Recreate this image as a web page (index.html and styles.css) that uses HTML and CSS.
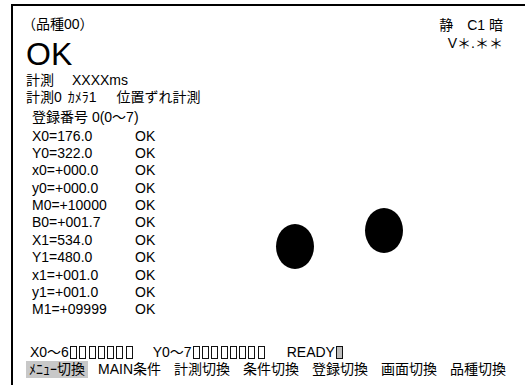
FILE: index.html
```html
<!DOCTYPE html>
<html lang="ja">
<head>
<meta charset="utf-8">
<link rel="stylesheet" href="styles.css">
</head>
<body>
<div class="frame">
  <header class="head">
    <div class="head-left">
      <div class="title">（品種00）</div>
      <div class="result">OK</div>
      <div class="line">計測<span class="gap-l">XXXXms</span></div>
      <div class="line">計測0<span class="gap-s">ｶﾒﾗ1</span><span class="gap-m">位置ずれ計測</span></div>
    </div>
    <div class="head-right">
      <div class="line">静　C1 暗</div>
      <div class="line">V＊.＊＊</div>
    </div>
  </header>

  <section class="data">
    <div class="reg">登録番号 0(0～7)</div>
    <div class="rows">
      <span>X0=176.0</span><span>OK</span>
      <span>Y0=322.0</span><span>OK</span>
      <span>x0=+000.0</span><span>OK</span>
      <span>y0=+000.0</span><span>OK</span>
      <span>M0=+10000</span><span>OK</span>
      <span>B0=+001.7</span><span>OK</span>
      <span>X1=534.0</span><span>OK</span>
      <span>Y1=480.0</span><span>OK</span>
      <span>x1=+001.0</span><span>OK</span>
      <span>y1=+001.0</span><span>OK</span>
      <span>M1=+09999</span><span>OK</span>
    </div>
  </section>

  <div class="blob blob-a"></div>
  <div class="blob blob-b"></div>

  <footer class="foot">
    <div class="io">
      <span class="io-label">X0～6</span><span class="bits"><i></i><i></i><i></i><i></i><i></i><i></i><i></i></span>
      <span class="io-label io-y">Y0～7</span><span class="bits"><i></i><i></i><i></i><i></i><i></i><i></i><i></i><i></i></span>
      <span class="io-label io-ready">READY</span><span class="bits"><i class="on"></i></span>
    </div>
    <nav class="menu">
      <span class="item active">ﾒﾆｭｰ切換</span>
      <span class="item">MAIN条件</span>
      <span class="item">計測切換</span>
      <span class="item">条件切換</span>
      <span class="item">登録切換</span>
      <span class="item">画面切換</span>
      <span class="item">品種切換</span>
    </nav>
  </footer>
</div>
</body>
</html>
```

FILE: styles.css
```css
html, body {
  margin: 0;
  padding: 0;
  background: #fff;
}
body {
  width: 525px;
  height: 385px;
  overflow: hidden;
  font-family: "Liberation Sans", "Noto Sans CJK JP", sans-serif;
  font-size: 14px;
  color: #000;
}
.frame {
  position: relative;
  margin: 4px 0 0 11px;
  height: 381px;
  box-sizing: border-box;
  border-top: 2px solid #000;
  border-left: 2px solid #000;
  display: flex;
  flex-direction: column;
}
.head {
  display: flex;
  justify-content: space-between;
  padding: 10px 22px 0 13px;
}
.title {
  line-height: 16px;
  margin-left: -4px;
}
.result {
  font-size: 32px;
  line-height: 28px;
  margin-top: 8px;
}
.head-left .result + .line {
  margin-top: 3.5px;
}
.line {
  line-height: 17px;
  white-space: nowrap;
}
.gap-l { margin-left: 18px; }
.gap-s { margin-left: 6px; }
.gap-m { margin-left: 20px; }
.head-right {
  text-align: right;
}
.head-right .line {
  line-height: 18px;
}
.data {
  padding-left: 19px;
  margin-top: 3px;
}
.reg {
  line-height: 17px;
}
.rows {
  margin-top: 2px;
  display: grid;
  grid-template-columns: 103px auto;
  grid-auto-rows: 17.4px;
  align-items: center;
  line-height: 17.4px;
}
.blob {
  position: absolute;
  width: 38px;
  height: 45px;
  border-radius: 50%;
  background: #000;
}
.blob-a { left: 263px; top: 217.5px; }
.blob-b { left: 352px; top: 201.5px; }
.foot {
  margin-top: auto;
  padding: 0 0 7.5px 13px;
}
.io {
  line-height: 17px;
  padding-left: 4px;
  display: flex;
  align-items: center;
  white-space: nowrap;
}
.io-label { margin-right: 1px; }
.io-y { margin-left: 20px; }
.io-ready { margin-left: 22px; }
.bits {
  display: inline-flex;
  gap: 2.3px;
}
.bits i {
  display: block;
  width: 5px;
  height: 11px;
  border: 1px solid #111;
}
.bits i.on {
  background: #bdbdbd;
}
.menu {
  display: flex;
  gap: 13px;
  line-height: 17px;
  white-space: nowrap;
}
.item.active {
  background: #c8c8c8;
  padding: 0 3px;
  margin-right: -3px;
}
```
